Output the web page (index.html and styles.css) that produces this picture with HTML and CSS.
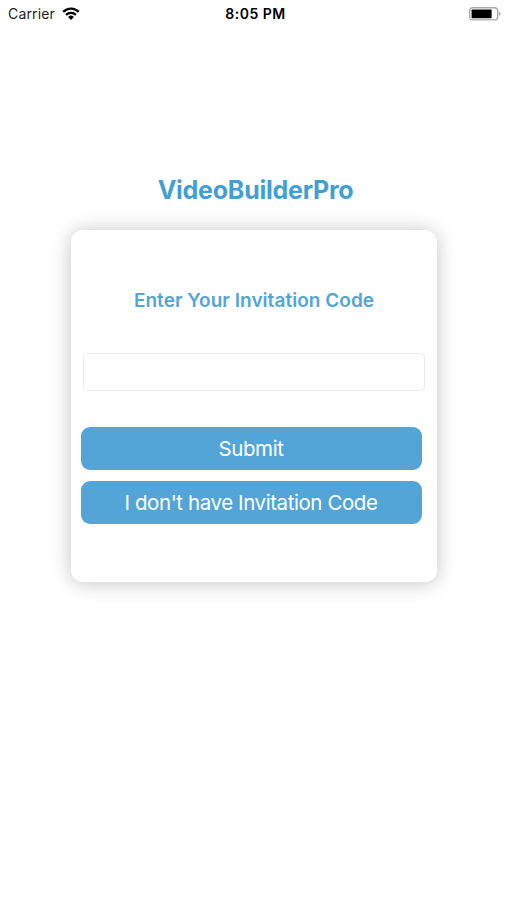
FILE: index.html
```html
<!DOCTYPE html>
<html lang="en">
  <head>
    <meta charset="UTF-8" />
    <meta name="viewport" content="width=device-width, initial-scale=1.0" />
    <title>VideoBuilderPro</title>
    <link rel="stylesheet" href="styles.css">
  </head>
  <body>
    <header class="statusBar">
      <div class="carrier">
        <span class="carrierName">Carrier</span>
        <svg class="wifi" width="18" height="14" viewBox="0 0 18 14">
          <path d="M1.2 4.9a11.1 11.1 0 0 1 15.6 0M4 7.8a7.2 7.2 0 0 1 10 0" fill="none" stroke="#000" stroke-width="2.3"/>
          <path d="M9 13l-2.9-3a4.1 4.1 0 0 1 5.8 0z"/>
        </svg>
      </div>
      <div class="time">8:05 PM</div>
      <svg class="battery" width="32" height="14" viewBox="0 0 32 14">
        <rect x="0.7" y="0.7" width="28" height="12.2" rx="3" fill="#fff" stroke="#aaa" stroke-width="1.4"/>
        <rect x="2.6" y="2.4" width="20" height="8.8" rx="0.8"/>
        <path d="M30 4.7q1.6.7 1.6 2.1t-1.6 2.1z" fill="#aaa"/>
      </svg>
    </header>
    <main>
      <h1>VideoBuilderPro</h1>
      <form class="card">
        <label for="codeField">Enter Your Invitation Code</label>
        <input type="text" id="codeField" class="codeField">
        <button type="button" class="btn">Submit</button>
        <button type="button" class="btn">I don't have Invitation Code</button>
      </form>
    </main>
  </body>
</html>
```
FILE: styles.css
```css
body {
  margin: 0;
  height: 900px;
  background-color: white;
  font-family: Inter, "Liberation Sans", sans-serif;
}
.statusBar {
  display: grid;
  grid-template-columns: 1fr auto 1fr;
  align-items: center;
  height: 27px;
  padding: 0 6px 0 8px;
  font-size: 14px;
}
.carrier {
  display: flex;
  align-items: center;
  gap: 7px;
}
.carrierName {
  letter-spacing: 0.15px;
  color: #222;
}
.time {
  padding-left: 2px;
  font-weight: 600;
  letter-spacing: 0.5px;
}
.battery {
  justify-self: end;
}
main {
  display: flex;
  flex-direction: column;
  align-items: center;
}
h1 {
  margin: 148px 0 25px 4px;
  font-size: 25px;
  line-height: 30px;
  font-weight: 700;
  letter-spacing: -0.25px;
  color: #429fd1;
}
.card {
  box-sizing: border-box;
  display: flex;
  flex-direction: column;
  width: 366px;
  height: 352px;
  padding: 58px 15px 0 10px;
  border-radius: 12px;
  background-color: white;
  box-shadow: 0 1px 20px rgba(0, 0, 0, 0.24);
}
label {
  padding: 1px 0 0 6px;
  text-align: center;
  font-size: 19px;
  line-height: 24px;
  font-weight: 600;
  letter-spacing: 0.04px;
  color: #52a5d6;
}
.codeField {
  box-sizing: border-box;
  width: 342px;
  height: 38px;
  margin: 40px 0 36px 2px;
  border: 1px solid #ebebeb;
  border-radius: 5px;
}
.btn {
  height: 43px;
  margin-bottom: 11px;
  padding: 0;
  border: none;
  border-radius: 9px;
  background-color: #52a5d6;
  color: white;
  font-family: inherit;
  font-size: 20.5px;
  letter-spacing: -0.42px;
}
```
